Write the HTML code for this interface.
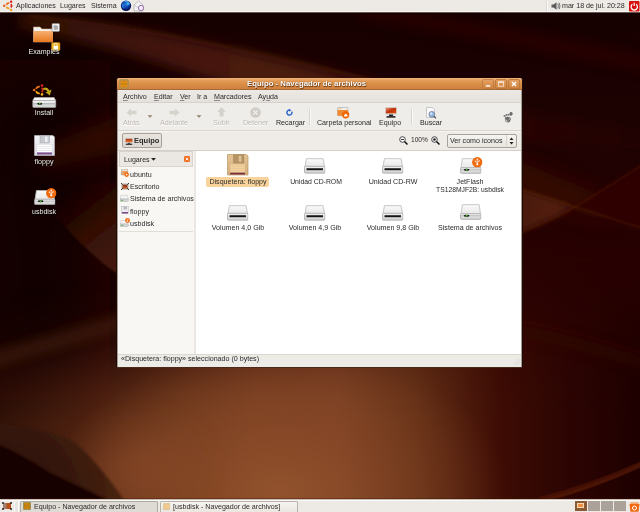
<!DOCTYPE html>
<html><head><meta charset="utf-8">
<style>
*{margin:0;padding:0;box-sizing:border-box}
html,body{width:640px;height:512px;overflow:hidden;background:#1c0302}
body{position:relative;-webkit-font-smoothing:antialiased;font-family:"Liberation Sans",sans-serif;font-size:7.1px;color:#2a2a2a}
.a{position:absolute}
svg.a{overflow:visible}
.t{position:absolute;white-space:nowrap;line-height:8px;will-change:transform}
#wall{position:absolute;left:0;top:0}
.dl{position:absolute;white-space:nowrap;will-change:transform;color:#eeeae6;text-shadow:0 0 1px #000,0 1px 1px #000;line-height:8px;text-align:center;width:60px}
.dis{color:#bdb7af;text-shadow:0 1px 0 #fff}
.ctr{text-align:center}
u{text-decoration-thickness:0.6px;text-decoration-color:#8a8a8a;text-underline-offset:1px}
</style></head><body>
<svg width="0" height="0" style="position:absolute">
<defs>
<linearGradient id="drvTop" x1="0" y1="0" x2="0" y2="1"><stop offset="0" stop-color="#fafafa"/><stop offset="1" stop-color="#e8e8e8"/></linearGradient>
<linearGradient id="drvFront" x1="0" y1="0" x2="0" y2="1"><stop offset="0" stop-color="#f2f2f2"/><stop offset="1" stop-color="#cfcfcf"/></linearGradient>
<symbol id="drive" viewBox="0 0 22 16">
<path d="M2.5 0.5 H19.5 L21 8.5 H1 Z" fill="url(#drvTop)" stroke="#b8b8b8" stroke-width="0.8"/>
<rect x="0.5" y="8.3" width="21" height="7" rx="1" fill="url(#drvFront)" stroke="#a8a8a8" stroke-width="0.8"/>
<rect x="2.6" y="10.3" width="16.8" height="2" fill="#151515"/>
</symbol>
<symbol id="hdd" viewBox="0 0 22 16">
<path d="M2.5 0.5 H19.5 L21 10 H1 Z" fill="url(#drvTop)" stroke="#b8b8b8" stroke-width="0.8"/>
<rect x="0.5" y="9.8" width="21" height="5.7" rx="1" fill="url(#drvFront)" stroke="#a8a8a8" stroke-width="0.8"/>
<line x1="1" y1="11.9" x2="21" y2="11.9" stroke="#9a9a9a" stroke-width="0.6"/>
<ellipse cx="6.8" cy="11.9" rx="3" ry="1.1" fill="#111"/>
<rect x="5.8" y="11.2" width="2" height="1.4" fill="#5ad23a"/>
</symbol>
<symbol id="usbbadge" viewBox="0 0 10 10">
<circle cx="5" cy="5" r="4.9" fill="#f06a10"/>
<circle cx="5" cy="2.2" r="0.7" fill="#fff"/>
<circle cx="3.2" cy="4" r="0.6" fill="#fff"/>
<circle cx="6.8" cy="3.8" r="0.6" fill="#fff"/>
<path d="M5 2.5 V6.5 M3.2 4 L5 5.5 L6.8 3.8" stroke="#fff" stroke-width="0.6" fill="none"/>
<circle cx="5" cy="7" r="1" fill="#fff"/>
</symbol>
<symbol id="ubu" viewBox="0 0 12 12">
<path d="M4.46 4.91 A2.6 2.6 0 0 1 7.35 3.24" fill="none" stroke="#f06818" stroke-width="1.7"/>
<path d="M8.89 4.13 A2.6 2.6 0 0 1 8.89 7.47" fill="none" stroke="#d82020" stroke-width="1.7"/>
<path d="M7.35 8.36 A2.6 2.6 0 0 1 4.46 6.69" fill="none" stroke="#f09818" stroke-width="1.7"/>
<circle cx="9.1" cy="1.65" r="1.2" fill="#d81818"/>
<circle cx="2.2" cy="5.8" r="1.2" fill="#e85a18"/>
<circle cx="9.1" cy="9.95" r="1.2" fill="#f0a020"/>
</symbol>
</defs>
</svg>

<svg id="wall" width="640" height="512" viewBox="0 0 640 512">
<defs>
<filter id="bl40" x="-50%" y="-50%" width="200%" height="200%"><feGaussianBlur stdDeviation="40"/></filter>
<filter id="bl20" x="-50%" y="-50%" width="200%" height="200%"><feGaussianBlur stdDeviation="20"/></filter>
<filter id="bl10" x="-50%" y="-50%" width="200%" height="200%"><feGaussianBlur stdDeviation="10"/></filter>
<filter id="bl6" x="-50%" y="-50%" width="200%" height="200%"><feGaussianBlur stdDeviation="6"/></filter>
<filter id="bl3" x="-50%" y="-50%" width="200%" height="200%"><feGaussianBlur stdDeviation="3"/></filter>
<filter id="bl2" x="-50%" y="-50%" width="200%" height="200%"><feGaussianBlur stdDeviation="1.5"/></filter>
<filter id="bl1" x="-50%" y="-50%" width="200%" height="200%"><feGaussianBlur stdDeviation="0.8"/></filter>
<linearGradient id="hb" x1="0" y1="0" x2="640" y2="0" gradientUnits="userSpaceOnUse">
<stop offset="0" stop-color="#3a180a"/>
<stop offset="0.15" stop-color="#582814"/>
<stop offset="0.28" stop-color="#723c1e"/>
<stop offset="0.4" stop-color="#804424"/>
<stop offset="0.53" stop-color="#7e4224"/>
<stop offset="0.65" stop-color="#643016"/>
<stop offset="0.78" stop-color="#3e0c04"/>
<stop offset="0.9" stop-color="#2a0402"/>
<stop offset="1" stop-color="#1e0000"/>
</linearGradient>
<linearGradient id="vf" x1="0" y1="0" x2="0" y2="512" gradientUnits="userSpaceOnUse">
<stop offset="0" stop-color="#fff" stop-opacity="0"/>
<stop offset="0.42" stop-color="#fff" stop-opacity="0.0"/>
<stop offset="0.78" stop-color="#fff" stop-opacity="1"/>
<stop offset="1" stop-color="#fff" stop-opacity="1"/>
</linearGradient>
<mask id="vm"><path d="M-80 420 Q300 300 700 330 L700 600 L-80 600 Z" fill="#fff" filter="url(#bl40)"/></mask>
<linearGradient id="vtop" x1="0" y1="0" x2="0" y2="512" gradientUnits="userSpaceOnUse">
<stop offset="0" stop-color="#160000"/>
<stop offset="0.25" stop-color="#1e0202"/>
<stop offset="0.5" stop-color="#280202"/>
<stop offset="1" stop-color="#240000"/>
</linearGradient>
<linearGradient id="curveg" x1="60" y1="200" x2="130" y2="290" gradientUnits="userSpaceOnUse">
<stop offset="0" stop-color="#2a0804" stop-opacity="0"/>
<stop offset="0.4" stop-color="#341006"/>
<stop offset="1" stop-color="#4e200e"/>
</linearGradient>
<radialGradient id="glow" gradientUnits="userSpaceOnUse" cx="280" cy="490" r="230" gradientTransform="translate(280 490) scale(1 0.6) translate(-280 -490)">
<stop offset="0" stop-color="#94542e" stop-opacity="0.85"/>
<stop offset="0.5" stop-color="#8a4a28" stop-opacity="0.45"/>
<stop offset="1" stop-color="#8a4a28" stop-opacity="0"/>
</radialGradient>
</defs>
<rect width="640" height="512" fill="url(#vtop)"/>
<rect x="-40" y="60" width="150" height="340" fill="#100202" filter="url(#bl40)" opacity="0.85"/>
<path d="M40 150 Q80 130 130 112 L130 150 Q80 160 40 170 Z" fill="#3a0e06" filter="url(#bl10)" opacity="0.7"/>
<!-- left curved edge region -->
<path d="M30 190 Q54 215 54 215 Q75 239 99 260 Q108 268 130 282 L130 180 Z" fill="url(#curveg)" filter="url(#bl1)"/>
<rect width="640" height="512" fill="url(#hb)" mask="url(#vm)"/>
<rect x="0" y="300" width="640" height="212" fill="url(#glow)"/>
<!-- top swoosh band -->
<linearGradient id="bandg" x1="40" y1="0" x2="640" y2="0" gradientUnits="userSpaceOnUse"><stop offset="0" stop-color="#4a1a0a" stop-opacity="0.6"/><stop offset="0.37" stop-color="#4a1a0a" stop-opacity="1"/><stop offset="0.75" stop-color="#4a1a0a" stop-opacity="0.8"/><stop offset="0.8" stop-color="#3a0c06" stop-opacity="0.35"/><stop offset="1" stop-color="#3a0c06" stop-opacity="0.1"/></linearGradient>
<path d="M20 12 Q110 22 200 42 Q300 62 400 90 Q470 106 540 116 Q600 124 660 130 L660 150 Q600 146 540 144 Q470 136 400 128 Q300 104 200 76 Q110 46 20 28 Z" fill="url(#bandg)" filter="url(#bl6)"/>

<path d="M30 16 Q120 26 200 42 Q300 62 420 92" stroke="#5a2410" stroke-width="2" fill="none" filter="url(#bl2)" opacity="0.5"/>
<path d="M360 10 Q480 30 660 66" stroke="#2c0404" stroke-width="16" fill="none" filter="url(#bl6)" opacity="0.8"/>
<!-- diagonal band lower-left to upper-right -->
<path d="M-20 364 Q300 270 520 200" stroke="#4a200e" stroke-width="14" fill="none" filter="url(#bl6)" opacity="0.6"/>
<path d="M490 186 Q548 202 610 222 L610 200 Q548 172 490 150 Z" fill="#3a0e06" filter="url(#bl10)" opacity="0.8"/>
<path d="M575 207 Q608 187 650 160 L650 232 Q608 217 575 207 Z" fill="#2e0604" filter="url(#bl3)"/>
<linearGradient id="wedg" x1="520" y1="0" x2="580" y2="0" gradientUnits="userSpaceOnUse"><stop offset="0" stop-color="#4a1c0c"/><stop offset="0.6" stop-color="#52200e"/><stop offset="1" stop-color="#3a1008"/></linearGradient>
<path d="M500 183 Q548 198 575 207 Q548 222 500 240 Z" fill="url(#wedg)" filter="url(#bl3)"/>
<path d="M500 183 Q548 198 575 207 Q608 217 650 231" stroke="#6a2c12" stroke-width="1" fill="none" filter="url(#bl1)" opacity="0.7"/>
<path d="M500 240 Q548 222 575 207 Q608 187 650 160" stroke="#6a2c12" stroke-width="1" fill="none" filter="url(#bl1)" opacity="0.7"/>

<path d="M500 318 Q570 328 650 356" stroke="#4a1808" stroke-width="1" fill="none" filter="url(#bl1)" opacity="0.45"/>
<path d="M500 328 Q570 338 650 366" stroke="#340804" stroke-width="12" fill="none" filter="url(#bl6)" opacity="0.4"/>
<!-- bottom-left swoosh -->
<ellipse cx="140" cy="470" rx="45" ry="35" fill="#8e4e2c" opacity="0.55" filter="url(#bl20)"/>
<radialGradient id="swg" gradientUnits="userSpaceOnUse" cx="0" cy="500" r="125"><stop offset="0" stop-color="#2a1008"/><stop offset="0.6" stop-color="#36180a"/><stop offset="1" stop-color="#4a2412"/></radialGradient>
<path d="M-10 425 Q37 424 75 442 Q100 465 124 500 L-10 500 Z" fill="url(#swg)" filter="url(#bl1)"/>
<path d="M-10 440 Q25 455 50 472 Q82 487 108 500 L-10 500 Z" fill="#120402" opacity="0.95" filter="url(#bl1)"/>
<path d="M-10 440 Q25 455 50 472 Q82 487 108 500" stroke="#5a2a14" stroke-width="1" fill="none" filter="url(#bl1)" opacity="0.6"/>
<!-- bottom-right thin curve -->
<path d="M545 500 Q600 486 650 460" stroke="#7a3412" stroke-width="1.2" fill="none" filter="url(#bl1)" opacity="0.8"/>
<path d="M540 500 Q600 484 650 460" stroke="#5a1a08" stroke-width="6" fill="none" filter="url(#bl5)" opacity="0.5"/>
</svg>

<!-- ============ TOP PANEL ============ -->
<div class="a" style="left:0;top:0;width:640px;height:11px;background:#edeae5"></div>
<div class="a" style="left:0;top:11px;width:640px;height:1px;background:#f8f6f2"></div>
<div class="a" style="left:0;top:12px;width:640px;height:1px;background:#6a5650"></div>
<div class="a" style="left:0;top:13px;width:640px;height:1px;background:#140202"></div>
<svg class="a" style="left:1.8px;top:0px" width="12" height="12"><use href="#ubu"/></svg>
<div class="t" style="left:16px;top:1.6px">Aplicaciones</div>
<div class="t" style="left:60px;top:1.6px">Lugares</div>
<div class="t" style="left:91px;top:1.6px">Sistema</div>
<svg class="a" style="left:120px;top:0px" width="12" height="12" viewBox="0 0 12 12">
<defs><radialGradient id="glb" cx="0.45" cy="0.35" r="0.65"><stop offset="0" stop-color="#2a80d8"/><stop offset="0.55" stop-color="#0c3ca8"/><stop offset="1" stop-color="#000640"/></radialGradient></defs>
<circle cx="6" cy="5.8" r="5.2" fill="url(#glb)"/>
<path d="M4 1.5 Q6.5 1.2 7 3 Q6 4.5 7.5 5.5 Q9.5 5.2 10 3.5 Q9 1.5 7 0.9 Q5 0.7 4 1.5 Z" fill="#48b8f0" opacity="0.85"/>
<path d="M2 4 Q3.5 4 3.6 5.5 Q3 7 4.5 8 L3.5 8.5 Q1.5 7 2 4 Z" fill="#3a9ae0" opacity="0.7"/>
</svg>
<svg class="a" style="left:133px;top:0px" width="12" height="12" viewBox="0 0 12 12">
<path d="M1 5 L5.5 1 L10 5 V11 H1 Z" fill="#f4f4f4" stroke="#a8a8a8" stroke-width="0.7"/>
<path d="M1 5 L5.5 8 L10 5" fill="none" stroke="#b0b0b0" stroke-width="0.6"/>
<circle cx="8" cy="8" r="2.6" fill="#f4f0f8" stroke="#9060b0" stroke-width="0.9"/>
</svg>
<div class="a" style="left:546px;top:1px;width:2px;height:10px;border-left:1px solid #dcd8d2;border-right:1px solid #fafafa"></div>
<svg class="a" style="left:551px;top:2px" width="10" height="8" viewBox="0 0 10 8">
<path d="M0.5 2.5 H2.5 L5.5 0.3 V7.7 L2.5 5.5 H0.5 Z" fill="#5a5a5a"/>
<path d="M6.8 1.5 Q8 4 6.8 6.5 M8.2 0.8 Q9.8 4 8.2 7.2" stroke="#555" stroke-width="0.8" fill="none"/>
</svg>
<div class="t" style="left:562px;top:1.8px">mar 18 de jul. 20:28</div>
<svg class="a" style="left:629px;top:0.5px" width="10.5" height="10.5" viewBox="0 0 10 10">
<rect x="0" y="0" width="10" height="10" rx="1" fill="#d81010"/>
<path d="M3.2 3.2 A3 3 0 1 0 6.8 3.2" fill="none" stroke="#fff" stroke-width="1.2"/>
<path d="M5 1.6 V4.8" stroke="#f8d0d0" stroke-width="1.4"/>
</svg>

<!-- ============ DESKTOP ICONS ============ -->
<svg class="a" style="left:33px;top:23px" width="28" height="28" viewBox="0 0 28 28">
<defs><linearGradient id="fold" x1="0" y1="0" x2="0" y2="1"><stop offset="0" stop-color="#f8b070"/><stop offset="1" stop-color="#e87a20"/></linearGradient></defs>
<path d="M0.5 4 H7 L9 6 H19.5 V19 H0.5 Z" fill="#f4efe8" stroke="#c8a888" stroke-width="0.6"/>
<rect x="0.5" y="8" width="19.5" height="11" rx="0.8" fill="url(#fold)"/>
<rect x="19" y="0.5" width="7.5" height="8" rx="1" fill="#f0f0f0" stroke="#888" stroke-width="0.6"/>
<path d="M20.5 3 L22 2 L25 3 V6.5 L21 7 Z" fill="#aaa"/>
<rect x="18.5" y="19.5" width="8.5" height="8" rx="1" fill="#e8b020" stroke="#b07810" stroke-width="0.5"/>
<rect x="20.5" y="23" width="4.5" height="3.5" fill="#fff"/>
<path d="M21.3 23 V21.8 A1.4 1.4 0 0 1 24.2 21.8 V23" fill="none" stroke="#fff" stroke-width="0.8"/>
</svg>
<div class="dl" style="left:14px;top:47.6px">Examples</div>

<svg class="a" style="left:33px;top:84px" width="21" height="13" viewBox="0 0 21 13">
<path d="M3.01 4.84 A3.4 3.4 0 0 1 6.79 2.65" fill="none" stroke="#f07818" stroke-width="1.7"/>
<path d="M8.8 3.81 A3.4 3.4 0 0 1 8.8 8.19" fill="none" stroke="#d82818" stroke-width="1.7"/>
<path d="M6.79 9.35 A3.4 3.4 0 0 1 3.01 7.16" fill="none" stroke="#f0a818" stroke-width="1.7"/>
<circle cx="9" cy="1.6" r="1.3" fill="#e02020"/>
<circle cx="1.2" cy="6" r="1.3" fill="#f07020"/>
<circle cx="9" cy="10.4" r="1.3" fill="#f0b020"/>
<path d="M10 4.2 Q14 2 16.5 6.5 L18.5 5.6 L16.8 11.5 L12.5 8.2 L14.6 7.6 Q13 5 10.5 6" fill="#c0a818"/>
</svg>
<svg class="a" style="left:31.5px;top:96.5px" width="24.5" height="11" viewBox="0 0 24 11">
<path d="M2.2 0.5 H21.8 L23.5 3.6 H0.5 Z" fill="#f6f6f6" stroke="#bbb" stroke-width="0.6"/>
<rect x="0.5" y="3.5" width="23" height="7" rx="0.8" fill="url(#drvFront)" stroke="#a8a8a8" stroke-width="0.6"/>
<path d="M1 6.8 H23" stroke="#9a9a9a" stroke-width="0.8"/>
<ellipse cx="7.5" cy="6.8" rx="2.6" ry="1.1" fill="#111"/>
<rect x="6.8" y="6" width="1.4" height="1.6" fill="#60d030"/>
</svg>
<div class="dl" style="left:14px;top:108.9px">Install</div>

<svg class="a" style="left:34px;top:135px" width="21" height="21" viewBox="0 0 21 21">
<defs><linearGradient id="flp" x1="0" y1="0" x2="0" y2="1"><stop offset="0" stop-color="#f4f4f6"/><stop offset="1" stop-color="#dcdce4"/></linearGradient></defs>
<path d="M0.5 0.5 H19 L20.5 2 V20.5 H0.5 Z" fill="url(#flp)" stroke="#b4b4bc" stroke-width="0.7"/>
<rect x="6" y="0.5" width="9.5" height="7.5" fill="#c8c8d0" stroke="#a0a0a8" stroke-width="0.5"/>
<rect x="11" y="1.5" width="2.5" height="5.5" fill="#f0f0f4"/>
<rect x="3" y="9.5" width="15" height="8" fill="#fff" stroke="#d0d0d8" stroke-width="0.4"/>
<path d="M4 11.5 H17 M4 13.5 H17 M4 15.5 H17" stroke="#c4c4cc" stroke-width="0.4"/>
<rect x="3" y="17.5" width="15" height="2" fill="#7a4a8a"/>
</svg>
<div class="dl" style="left:14.4px;top:157.6px">floppy</div>

<svg class="a" style="left:33.5px;top:189.5px" width="21.5" height="15" viewBox="0 0 22 16" preserveAspectRatio="none"><use href="#hdd" width="22" height="16"/></svg>
<svg class="a" style="left:45.5px;top:187.5px" width="10.5" height="10.5"><use href="#usbbadge"/></svg>
<div class="dl" style="left:14.4px;top:207.6px">usbdisk</div>

<!-- ============ WINDOW ============ -->
<div class="a" style="left:116px;top:78px;width:407px;height:290px;background:#efebe7;border:1px solid #1e0a04;border-bottom-color:#4a2a1a;border-top:none;border-radius:3px 3px 0 0;box-shadow:inset 1px 0 0 #a49c94,inset -1px 0 0 #a49c94,inset 0 -1px 0 #8a7a6e"></div>
<div class="a" style="left:117px;top:78px;width:405px;height:12px;border-radius:3px 3px 0 0;background:linear-gradient(#f0b47a,#e09852 30%,#d98c44 60%,#cf8240);border-bottom:1px solid #a86a30"></div>
<svg class="a" style="left:119px;top:79px" width="10" height="10" viewBox="0 0 10 10">
<rect x="0.5" y="0.5" width="9" height="9" rx="1.5" fill="#c88a3a" stroke="#a89050" stroke-width="0.8"/>
<rect x="2" y="2" width="6" height="6" fill="#e09010"/>
<path d="M2 5 H8 M5 2 V3 M5 7 V8" stroke="#b07010" stroke-width="0.8"/>
</svg>
<div class="t" style="left:247px;top:80px;color:#fff;font-weight:bold;font-size:7.8px;text-shadow:0.5px 0.5px 1px #5a2a08,0 0 1px #7a4a18">Equipo - Navegador de archivos</div>
<svg class="a" style="left:482px;top:79px" width="39" height="10" viewBox="0 0 39 10">
<defs><linearGradient id="wbg" x1="0" y1="0" x2="0" y2="1"><stop offset="0" stop-color="#e6a262"/><stop offset="1" stop-color="#cf8440"/></linearGradient></defs>
<rect x="0.5" y="0.5" width="11" height="9" rx="1.5" fill="url(#wbg)" stroke="#b87a40" stroke-width="0.7"/>
<rect x="13.5" y="0.5" width="11" height="9" rx="1.5" fill="url(#wbg)" stroke="#b8763a" stroke-width="0.8"/>
<rect x="26.5" y="0.5" width="11" height="9" rx="1.5" fill="url(#wbg)" stroke="#b8763a" stroke-width="0.8"/>
<rect x="3.8" y="6.2" width="4.4" height="1.4" fill="#fff"/>
<rect x="16.5" y="2.7" width="5" height="4.6" fill="none" stroke="#f4e6d8" stroke-width="0.8"/>
<rect x="16.5" y="2.7" width="5" height="1.2" fill="#f4e6d8"/>
<path d="M30 3 L34 7 M34 3 L30 7" stroke="#fff" stroke-width="1.4"/>
</svg>

<!-- menubar -->
<div class="a" style="left:118px;top:90px;width:403px;height:12px;background:linear-gradient(#ece9e6,#e5e1dc)"></div>
<div class="a" style="left:118px;top:102px;width:403px;height:1px;background:#d6d1ca"></div>
<div class="t" style="left:123px;top:93px"><u>A</u>rchivo</div>
<div class="t" style="left:153.5px;top:93px"><u>E</u>ditar</div>
<div class="t" style="left:179.5px;top:93px"><u>V</u>er</div>
<div class="t" style="left:197px;top:93px">Ir a</div>
<div class="t" style="left:214px;top:93px"><u>M</u>arcadores</div>
<div class="t" style="left:258px;top:93px">Ay<u>u</u>da</div>

<!-- toolbar -->
<div class="a" style="left:118px;top:103px;width:403px;height:27px;background:#efedea"></div>
<div class="a" style="left:118px;top:129.5px;width:403px;height:1px;background:#d8d4ce"></div>
<div class="a" style="left:118px;top:130.5px;width:403px;height:1px;background:#f6f4f0"></div>
<svg class="a" style="left:126px;top:108px" width="11" height="9" viewBox="0 0 11 9"><path d="M0.5 4.5 L5 0.5 V2.8 H10.5 V6.2 H5 V8.5 Z" fill="#d6d2cc"/></svg>
<svg class="a" style="left:147px;top:114.5px" width="6" height="3" viewBox="0 0 6 3"><path d="M0.5 0.3 H5.5 L3 2.8 Z" fill="#8c8070"/></svg>
<div class="t dis" style="left:123px;top:118.6px">Atrás</div>
<svg class="a" style="left:168.5px;top:108px" width="11" height="9" viewBox="0 0 11 9"><path d="M10.5 4.5 L6 0.5 V2.8 H0.5 V6.2 H6 V8.5 Z" fill="#d6d2cc"/></svg>
<svg class="a" style="left:196px;top:114.5px" width="6" height="3" viewBox="0 0 6 3"><path d="M0.5 0.3 H5.5 L3 2.8 Z" fill="#8c8070"/></svg>
<div class="t dis" style="left:159.5px;top:118.6px">Adelante</div>
<svg class="a" style="left:217px;top:107px" width="9" height="10" viewBox="0 0 9 10"><path d="M4.5 0.3 L8.8 4.8 H6.5 V9.6 H2.5 V4.8 H0.2 Z" fill="#d4d0ca"/></svg>
<div class="t dis" style="left:213px;top:118.6px">Subir</div>
<svg class="a" style="left:250px;top:107px" width="11" height="11" viewBox="0 0 11 11"><circle cx="5.5" cy="5.5" r="5.3" fill="#d0cbc5"/><path d="M3.3 3.3 L7.7 7.7 M7.7 3.3 L3.3 7.7" stroke="#f4f2ee" stroke-width="1.1"/></svg>
<div class="t dis" style="left:242.6px;top:118.6px">Detener</div>
<svg class="a" style="left:286px;top:109px" width="7" height="7" viewBox="0 0 8 8"><path d="M6.6 3 A2.9 2.9 0 1 1 4.2 1.2" fill="none" stroke="#3068c8" stroke-width="1.7"/><path d="M3.4 -0.2 L6.2 1.3 L3.6 3.2 Z" fill="#3068c8"/></svg>
<div class="t" style="left:275.6px;top:118.6px">Recargar</div>
<div class="a" style="left:309px;top:108.5px;width:2px;height:16px;border-left:1px solid #d8d4ce;border-right:1px solid #fbfaf8"></div>
<svg class="a" style="left:336.5px;top:106.5px" width="13" height="12" viewBox="0 0 13 12">
<rect x="0.5" y="0.5" width="10.5" height="8.2" rx="0.6" fill="#eee" stroke="#999" stroke-width="0.5"/>
<rect x="0.5" y="3" width="10.5" height="5.7" fill="#f08a30"/>
<rect x="1.5" y="1.3" width="3" height="1" fill="#f8c060"/>
<circle cx="8.7" cy="7.8" r="3.6" fill="#f06400"/>
<path d="M7 8.2 L8.7 6.5 L10.4 8.2 V9.4 H7 Z" fill="#fff"/>
</svg>
<div class="t" style="left:317px;top:118.6px">Carpeta personal</div>
<svg class="a" style="left:384.5px;top:106.5px" width="12" height="11" viewBox="0 0 12 11">
<defs><linearGradient id="scr" x1="0" y1="0" x2="1" y2="1"><stop offset="0" stop-color="#e89070"/><stop offset="0.5" stop-color="#c03008"/><stop offset="1" stop-color="#e05a10"/></linearGradient></defs>
<rect x="0.3" y="0.3" width="11.4" height="7.2" fill="#e0e8e8" stroke="#c4c8c8" stroke-width="0.4"/>
<rect x="0.8" y="0.8" width="10.4" height="5.6" fill="url(#scr)"/>
<rect x="4" y="7.5" width="4" height="1.5" fill="#222"/>
<rect x="1.5" y="9" width="9" height="1.7" rx="0.5" fill="#333"/>
</svg>
<div class="t" style="left:379px;top:118.6px">Equipo</div>
<div class="a" style="left:410.5px;top:108.5px;width:2px;height:16px;border-left:1px solid #d8d4ce;border-right:1px solid #fbfaf8"></div>
<svg class="a" style="left:425.5px;top:106.5px" width="11" height="12" viewBox="0 0 11 12">
<path d="M0.5 0.5 H6.5 L8.5 2.5 V10.5 H0.5 Z" fill="#fafafa" stroke="#a8a8a8" stroke-width="0.6"/>
<circle cx="5.8" cy="7.3" r="2.9" fill="#90b8e8" stroke="#667" stroke-width="0.6"/>
<circle cx="5.2" cy="6.6" r="1.2" fill="#d8e8f8"/>
<path d="M7.8 9.3 L10 11.3" stroke="#555" stroke-width="1.2"/>
</svg>
<div class="t" style="left:419.6px;top:118.6px">Buscar</div>
<svg class="a" style="left:502.5px;top:112px" width="10" height="11" viewBox="0 0 10 11">
<path d="M2.2 5.2 Q4 4.2 6.5 5 Q8 5.6 7.8 7.6 Q7.5 10.2 5 10.6 Q2.5 10.8 2 8.5 Q1.6 6.5 2.2 5.2 Z" fill="#6e6e6e"/>
<ellipse cx="1.6" cy="4" rx="1.1" ry="0.9" fill="#7a7a7a"/>
<ellipse cx="3.5" cy="3" rx="1.1" ry="1" fill="#7a7a7a"/>
<ellipse cx="5.5" cy="2.8" rx="1" ry="1" fill="#7a7a7a"/>
<ellipse cx="8" cy="1.9" rx="1.6" ry="1.8" transform="rotate(30 8 1.9)" fill="#6a6a6a"/>
<path d="M2.6 7.6 Q3 9.4 4.6 9.6" stroke="#fafafa" stroke-width="0.9" fill="none"/>
<path d="M5.8 8.2 Q6.6 7.4 6.4 6.4" stroke="#e8e8e8" stroke-width="0.6" fill="none"/>
</svg>

<!-- location bar -->
<div class="a" style="left:122px;top:133px;width:40px;height:15px;border:1px solid #a8a29a;border-radius:2px;background:linear-gradient(#e8e4de,#dcd7d0)"></div>
<svg class="a" style="left:125px;top:137.5px" width="8" height="7" viewBox="0 0 8 7">
<rect x="0" y="0" width="8" height="4.8" fill="#d8d8d8"/><rect x="0.7" y="0.7" width="6.6" height="3.4" fill="#b84018"/><rect x="0.7" y="2.6" width="6.6" height="1.5" fill="#e07030"/>
<rect x="2.8" y="4.8" width="2.4" height="0.9" fill="#222"/><rect x="0.8" y="5.7" width="6.4" height="1.2" fill="#2a2a2a"/>
</svg>
<div class="t" style="left:134px;top:136.6px;font-weight:bold;font-size:7.5px">Equipo</div>
<svg class="a" style="left:398.5px;top:136px" width="9" height="9" viewBox="0 0 9 9"><circle cx="3.5" cy="3.5" r="2.8" fill="#fff" stroke="#333" stroke-width="0.9"/><path d="M2 3.5 H5" stroke="#222" stroke-width="0.9"/><path d="M5.5 5.5 L8.5 8.5" stroke="#111" stroke-width="1.5"/></svg>
<div class="t" style="left:410.6px;top:136.4px;font-size:6.6px">100%</div>
<svg class="a" style="left:430.5px;top:136px" width="9" height="9" viewBox="0 0 9 9"><circle cx="3.5" cy="3.5" r="2.8" fill="#fff" stroke="#333" stroke-width="0.9"/><circle cx="3.5" cy="3.5" r="1.3" fill="#222"/><path d="M5.5 5.5 L8.5 8.5" stroke="#111" stroke-width="1.5"/></svg>
<div class="a" style="left:446.5px;top:133.5px;width:70px;height:14px;border:1px solid #a8a29a;border-radius:2px;background:linear-gradient(#f6f4f1,#e8e4de)"></div>
<div class="a" style="left:506px;top:135px;width:1px;height:11px;background:#d8d3cc"></div>
<svg class="a" style="left:509px;top:136.5px" width="5" height="8" viewBox="0 0 5 8"><path d="M0.5 3 L2.5 0.5 L4.5 3 Z M0.5 5 L2.5 7.5 L4.5 5 Z" fill="#222"/></svg>
<div class="t" style="left:449.5px;top:136.6px">Ver como iconos</div>

<div class="a" style="left:118px;top:150px;width:403px;height:1px;background:#d4cfc8"></div>

<!-- sidebar -->
<div class="a" style="left:118px;top:151px;width:76px;height:203px;background:#f8f7f4"></div>
<div class="a" style="left:119px;top:151px;width:74px;height:16px;background:#ebe8e3;border:1px solid #d8d3cc"></div>
<div class="t" style="left:123.6px;top:155.8px">Lugares</div>
<svg class="a" style="left:150.5px;top:158px" width="5" height="3" viewBox="0 0 5 3"><path d="M0 0 H5 L2.5 2.8 Z" fill="#222"/></svg>
<svg class="a" style="left:184px;top:156px" width="6" height="6" viewBox="0 0 6 6"><rect x="0" y="0" width="6" height="6" rx="1.2" fill="#f07020"/><path d="M1.7 1.7 L4.3 4.3 M4.3 1.7 L1.7 4.3" stroke="#fff" stroke-width="0.9"/></svg>
<div class="a" style="left:193.5px;top:151px;width:2.5px;height:203px;background:#ebe8e4"></div>
<div class="a" style="left:119px;top:231px;width:74px;height:1px;background:#e2ded8"></div>
<svg class="a" style="left:120.5px;top:169px" width="8" height="8" viewBox="0 0 8 8"><rect x="0.3" y="0.5" width="6.5" height="5.5" fill="#f0a060" stroke="#999" stroke-width="0.4"/><rect x="0.3" y="0.5" width="6.5" height="1.5" fill="#ddd"/><circle cx="5.6" cy="5.6" r="2.3" fill="#f06000"/><circle cx="5.6" cy="5.6" r="0.9" fill="#fff"/></svg>
<div class="t" style="left:129.5px;top:170.7px">ubuntu</div>
<svg class="a" style="left:120.5px;top:182.5px" width="8" height="7" viewBox="0 0 8 7"><rect x="0.5" y="0.5" width="7" height="6" fill="#e8e4e0" stroke="#aaa" stroke-width="0.4"/><rect x="1.5" y="1.5" width="5" height="4" fill="#8a3818"/><rect x="1.5" y="3.8" width="5" height="1.7" fill="#c06030"/><path d="M0 0 L1.8 1.8 M8 0 L6.2 1.8 M0 7 L1.8 5.2 M8 7 L6.2 5.2" stroke="#222" stroke-width="0.9"/></svg>
<div class="t" style="left:129.5px;top:183.0px">Escritorio</div>
<svg class="a" style="left:120.3px;top:194.8px" width="8.5" height="6.8" viewBox="0 0 8.5 6.8">
<path d="M1 0.4 H7.5 L8.2 4 H0.3 Z" fill="#f4f4f4" stroke="#b0b0b0" stroke-width="0.4"/>
<rect x="0.3" y="4" width="7.9" height="2.5" fill="#d4d4d4" stroke="#a0a0a0" stroke-width="0.4"/>
<rect x="1" y="4.9" width="2.2" height="0.8" fill="#40b030"/>
</svg>
<div class="t" style="left:129.5px;top:195.3px">Sistema de archivos</div>
<svg class="a" style="left:120.5px;top:205.5px" width="8" height="8" viewBox="0 0 8 8"><rect x="0.3" y="0.3" width="7.4" height="7.4" fill="#ececf0" stroke="#aaa" stroke-width="0.4"/><rect x="2.5" y="0.3" width="3.5" height="3" fill="#bbb"/><rect x="1" y="6" width="6" height="1.5" fill="#7a4a8a"/></svg>
<div class="t" style="left:129.5px;top:207.6px">floppy</div>
<svg class="a" style="left:120.3px;top:219.5px" width="8.5" height="6.8" viewBox="0 0 8.5 6.8">
<path d="M1 0.4 H7.5 L8.2 4 H0.3 Z" fill="#f4f4f4" stroke="#b0b0b0" stroke-width="0.4"/>
<rect x="0.3" y="4" width="7.9" height="2.5" fill="#d4d4d4" stroke="#a0a0a0" stroke-width="0.4"/>
<rect x="1" y="4.9" width="2.2" height="0.8" fill="#40b030"/>
</svg>
<svg class="a" style="left:124.5px;top:217.5px" width="5" height="5"><use href="#usbbadge"/></svg>
<div class="t" style="left:129.5px;top:220.0px">usbdisk</div>

<!-- content -->
<div class="a" style="left:196px;top:151px;width:325px;height:203px;background:#fff"></div>
<svg class="a" style="left:227px;top:154px" width="21.5" height="21.5" viewBox="0 0 21 21">
<defs><linearGradient id="flps" x1="0" y1="0" x2="0" y2="1"><stop offset="0" stop-color="#e4c494"/><stop offset="1" stop-color="#d4ae7a"/></linearGradient></defs>
<path d="M0.5 0.5 H19 L20.5 2 V20.5 H0.5 Z" fill="url(#flps)" stroke="#b89868" stroke-width="0.7"/>
<rect x="6.5" y="0.8" width="10" height="8" fill="#b89464" stroke="#a08050" stroke-width="0.5"/>
<rect x="11.5" y="1.8" width="2.5" height="5.8" fill="#dcc098"/>
<rect x="3" y="10" width="14.5" height="8.5" fill="#f4d4a0" stroke="#d8b888" stroke-width="0.4"/>
<path d="M4 12 H16.5 M4 14 H16.5 M4 16 H16.5" stroke="#d4b080" stroke-width="0.4"/>
<rect x="3" y="18.2" width="14.5" height="1.8" fill="#7a3040"/>
</svg>
<div class="a" style="left:206px;top:176.5px;width:62.5px;height:10px;background:#f8d49c;border-radius:2px"></div>
<div class="t ctr" style="left:188px;top:178.2px;width:100px">Disquetera: floppy</div>
<svg class="a" style="left:304px;top:157.5px" width="21.5" height="16"><use href="#drive"/></svg>
<div class="t ctr" style="left:265.5px;top:178.2px;width:100px;font-size:6.85px">Unidad CD-ROM</div>
<svg class="a" style="left:381.5px;top:157.5px" width="21.5" height="16"><use href="#drive"/></svg>
<div class="t ctr" style="left:343px;top:178.2px;width:100px">Unidad CD-RW</div>
<svg class="a" style="left:459.5px;top:158px" width="21.5" height="16"><use href="#hdd"/></svg>
<svg class="a" style="left:471.5px;top:156.5px" width="10.5" height="10.5"><use href="#usbbadge"/></svg>
<div class="t ctr" style="left:420px;top:178.2px;width:100px">JetFlash</div>
<div class="t ctr" style="left:420px;top:186.4px;width:100px;font-size:6.75px">TS128MJF2B: usbdisk</div>
<svg class="a" style="left:227px;top:204.5px" width="21.5" height="16"><use href="#drive"/></svg>
<div class="t ctr" style="left:187.5px;top:224.4px;width:100px">Volumen 4,0 Gib</div>
<svg class="a" style="left:304px;top:204.5px" width="21.5" height="16"><use href="#drive"/></svg>
<div class="t ctr" style="left:265px;top:224.4px;width:100px">Volumen 4,9 Gib</div>
<svg class="a" style="left:381.5px;top:204.5px" width="21.5" height="16"><use href="#drive"/></svg>
<div class="t ctr" style="left:342.5px;top:224.4px;width:100px">Volumen 9,8 Gib</div>
<svg class="a" style="left:459.5px;top:204px" width="21.5" height="16"><use href="#hdd"/></svg>
<div class="t ctr" style="left:420px;top:224.4px;width:100px">Sistema de archivos</div>

<!-- status -->
<div class="a" style="left:118px;top:354px;width:403px;height:13px;background:#ecebe6;border-top:1px solid #dcd8d0"></div>
<div class="t" style="left:120.5px;top:355.4px">«Disquetera: floppy» seleccionado (0 bytes)</div>
<svg class="a" style="left:513px;top:358px" width="7" height="7" viewBox="0 0 7 7"><path d="M6.5 1 L1 6.5 M6.5 3.5 L3.5 6.5 M6.5 5.5 L5.5 6.5" stroke="#d4d0c8" stroke-width="0.7"/></svg>

<!-- ============ BOTTOM PANEL ============ -->
<div class="a" style="left:0;top:498px;width:640px;height:1px;background:rgba(60,20,0,0.35)"></div>
<div class="a" style="left:0;top:499px;width:640px;height:1px;background:#c8beb4"></div>
<div class="a" style="left:0;top:500px;width:640px;height:1px;background:#f8f9f8"></div>
<div class="a" style="left:0;top:501px;width:640px;height:11px;background:#edeae6"></div>
<svg class="a" style="left:2px;top:502px" width="10" height="8" viewBox="0 0 10 8">
<rect x="1" y="1" width="8" height="6" fill="#b85018"/><rect x="1" y="1" width="3.5" height="6" fill="#a08070"/>
<circle cx="1" cy="1" r="1" fill="#222"/><circle cx="9" cy="1" r="1" fill="#222"/><circle cx="1" cy="7" r="1" fill="#222"/><circle cx="9" cy="7" r="1" fill="#222"/>
</svg>
<div class="a" style="left:14px;top:501px;width:5px;height:11px;border-left:1px solid #fff;border-right:1px solid #fff;background:#e8e5e0"></div>
<div class="a" style="left:20px;top:501px;width:137.5px;height:11px;border:1px solid #b0aaa2;border-bottom:none;border-radius:2px 2px 0 0;background:#dedad4"></div>
<svg class="a" style="left:23px;top:502px" width="8" height="8" viewBox="0 0 8 8"><rect x="0" y="0" width="8" height="8" rx="1" fill="#9a9058"/><rect x="1" y="1" width="6" height="6" fill="#d08810"/><path d="M1.5 2.2 H3 M5 2.2 H6.5 M1 4 H7 M1.5 5.8 H3 M5 5.8 H6.5" stroke="#a86a08" stroke-width="0.7"/></svg>
<div class="t" style="left:33.8px;top:502.6px">Equipo - Navegador de archivos</div>
<div class="a" style="left:159.5px;top:501px;width:138.5px;height:11px;border:1px solid #b8b2aa;border-bottom:none;border-radius:2px 2px 0 0;background:linear-gradient(#f6f4f0,#eae6e0)"></div>
<svg class="a" style="left:163px;top:502.5px" width="7" height="7" viewBox="0 0 8 8"><rect x="0" y="0" width="8" height="8" rx="1" fill="#d8c8a0"/><rect x="1" y="1" width="6" height="6" fill="#f0c890"/></svg>
<div class="t" style="left:173px;top:502.6px">[usbdisk - Navegador de archivos]</div>
<div class="a" style="left:574.5px;top:501px;width:12.5px;height:10px;background:#8a5a34"></div>
<div class="a" style="left:576.5px;top:503px;width:7.5px;height:4.5px;background:#f09040;border:1px solid #f8d8b0"></div>
<div class="a" style="left:587.5px;top:501px;width:12.5px;height:10px;background:#aaa198"></div>
<div class="a" style="left:601px;top:501px;width:12.2px;height:10px;background:#aaa198"></div>
<div class="a" style="left:614px;top:501px;width:12.3px;height:10px;background:#aaa198"></div>
<svg class="a" style="left:628.5px;top:501.5px" width="11" height="10" viewBox="0 0 11 10">
<rect x="1.5" y="0.3" width="8" height="1.6" fill="#f6a060"/>
<path d="M0.5 2 H10.5 L9.5 9.8 H1.5 Z" fill="#f06810"/>
<circle cx="5.5" cy="6" r="2" fill="none" stroke="#fff" stroke-width="1"/>
</svg>
</body></html>
